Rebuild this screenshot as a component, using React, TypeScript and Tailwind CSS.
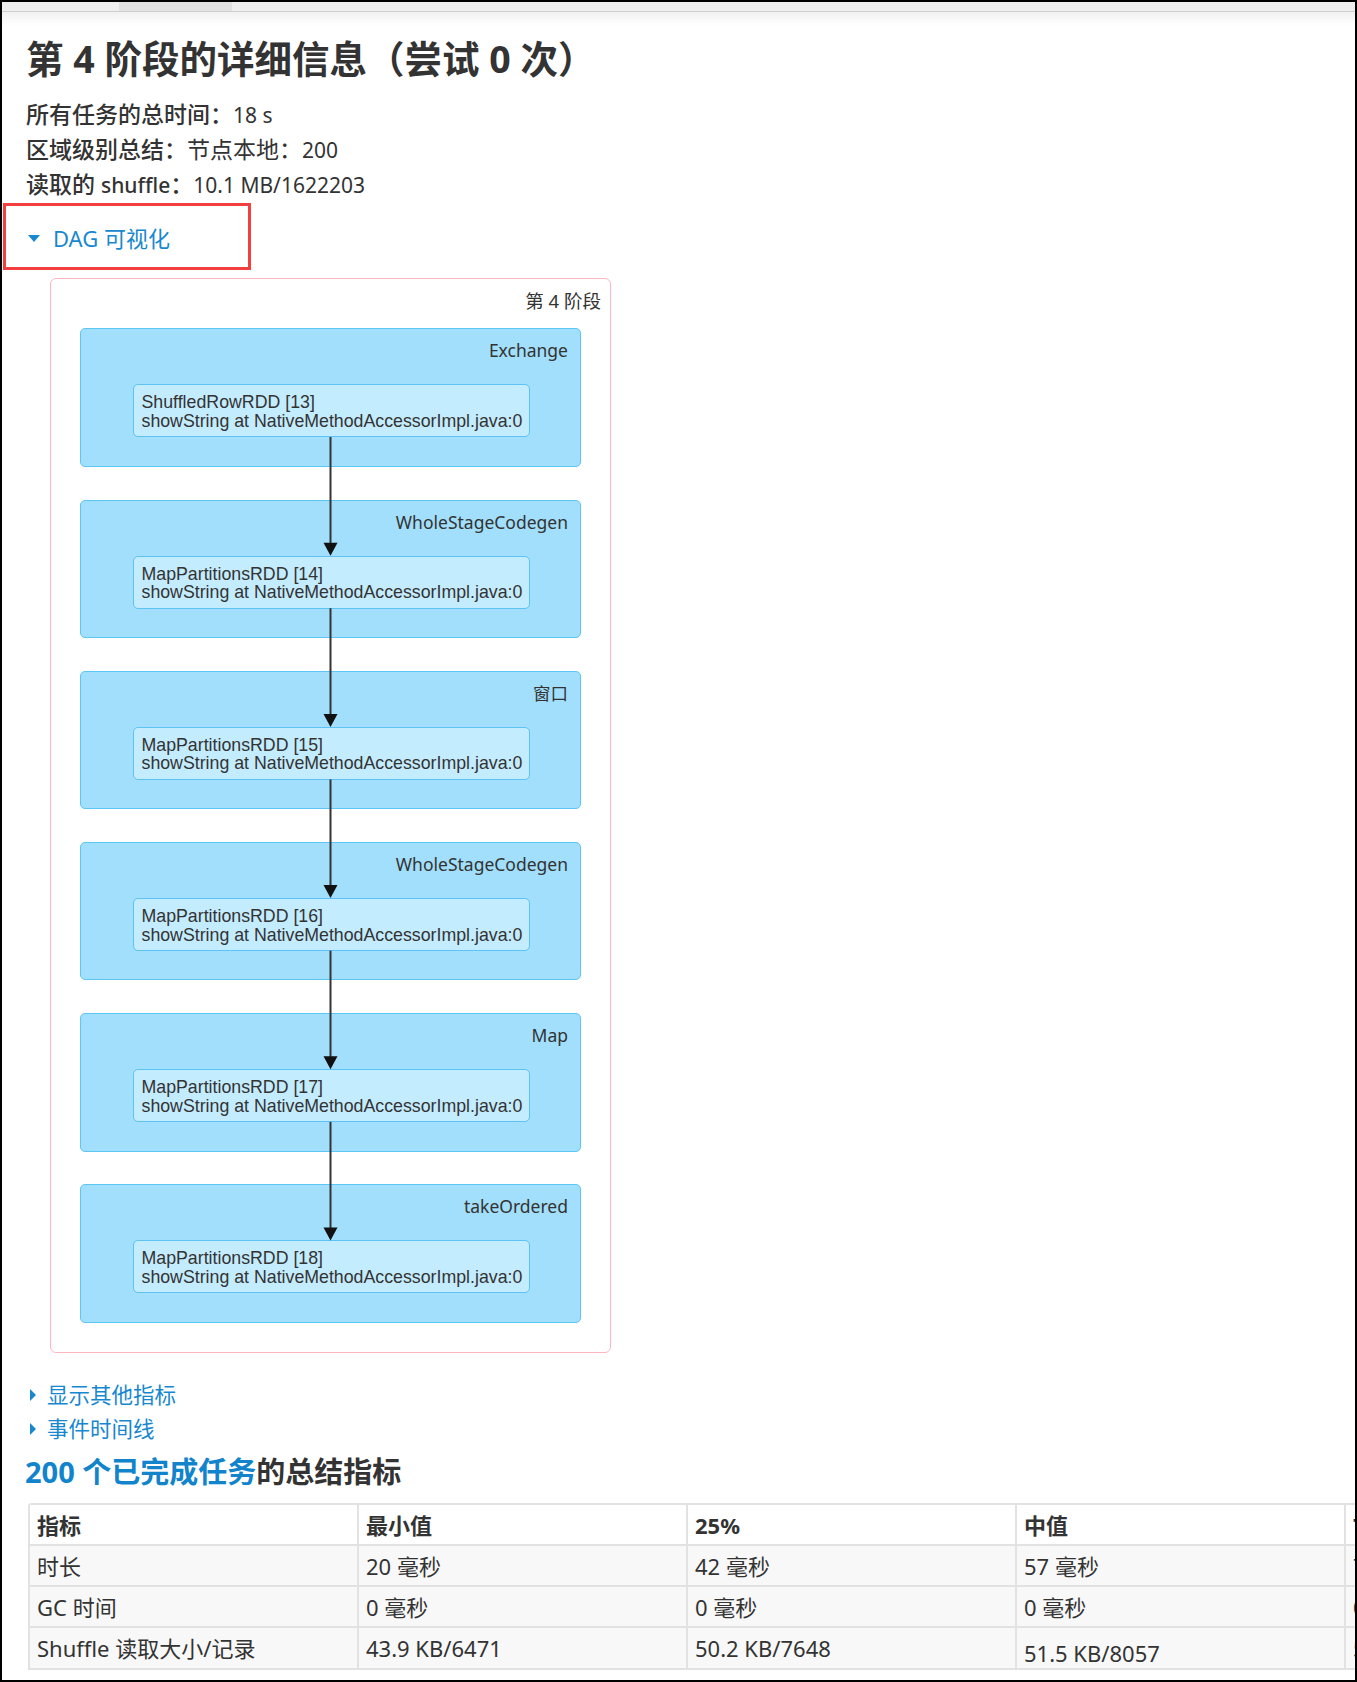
import React from "react";

const clusters = [
  { label: "Exchange", rdd: "ShuffledRowRDD [13]" },
  { label: "WholeStageCodegen", rdd: "MapPartitionsRDD [14]" },
  { label: "窗口", rdd: "MapPartitionsRDD [15]" },
  { label: "WholeStageCodegen", rdd: "MapPartitionsRDD [16]" },
  { label: "Map", rdd: "MapPartitionsRDD [17]" },
  { label: "takeOrdered", rdd: "MapPartitionsRDD [18]" },
];

const PITCH = 171.2;

const rows = [
  ["时长", "20 毫秒", "42 毫秒", "57 毫秒", "72 毫秒"],
  ["GC 时间", "0 毫秒", "0 毫秒", "0 毫秒", "0 毫秒"],
  ["Shuffle 读取大小/记录", "43.9 KB/6471", "50.2 KB/7648", "51.5 KB/8057", "52.8 KB/8290"],
];

function TriangleDown() {
  return (
    <svg viewBox="0 0 12 7" className="h-[7px] w-[12px]" aria-hidden>
      <path d="M0 0h12L6 7z" fill="currentColor" />
    </svg>
  );
}

function TriangleRight() {
  return (
    <svg viewBox="0 0 6 12" className="h-[12px] w-[6px]" aria-hidden>
      <path d="M0 0l6 6-6 6z" fill="currentColor" />
    </svg>
  );
}

function Latin({ children }: { children: React.ReactNode }) {
  return <span className="text-[21px] leading-none">{children}</span>;
}

function DagGraph() {
  return (
    <div className="ml-[48px] mt-[23px] h-[1075px] w-[561px] rounded-[6px] border border-[#ffb6c1] pt-[9px]">
      <div className="pr-[9px] text-right text-[18.5px] leading-[26px] text-[#333]">第 4 阶段</div>
      <div className="relative mx-[29px] mt-[14px] flex flex-col gap-[32.7px]">
        {clusters.map((c, i) => (
          <div
            key={i}
            className="h-[138.5px] rounded-[5px] border-[1.5px] border-[#5cc6f7] bg-[#a1dffc] pl-[51.5px] pt-[9px]"
          >
            <div className="pr-[12px] text-right text-[17.5px] leading-[24px] text-[#333]">{c.label}</div>
            <div className="mt-[22px] h-[53px] w-[397px] rounded-[5px] border border-[#5ec2f4] bg-[#c4ecff] pl-[8px] pt-[8px] font-['Liberation_Sans',Arial,sans-serif] text-[17.75px] leading-[18.7px] text-[#333]">
              <div>{c.rdd}</div>
              <div>showString at NativeMethodAccessorImpl.java:0</div>
            </div>
          </div>
        ))}
        <svg className="pointer-events-none absolute inset-0 h-full w-full" aria-hidden>
          {clusters.slice(0, -1).map((_, i) => {
            const y1 = i * PITCH + 109;
            const y2 = (i + 1) * PITCH + 56.5;
            return (
              <g key={i}>
                <line x1={250.5} y1={y1} x2={250.5} y2={y2 - 12} stroke="#333" strokeWidth={2} />
                <path d={`M243.5 ${y2 - 13}h14l-7 13z`} fill="#111" />
              </g>
            );
          })}
        </svg>
      </div>
    </div>
  );
}

export default function App() {
  return (
    <div className="relative h-[1682px] w-[1357px] overflow-hidden border-2 border-black bg-white font-['Noto_Sans','Noto_Sans_CJK_SC',sans-serif] text-[#333]">
      {/* browser tab strip */}
      <div className="flex h-[9px] bg-[#efefef]">
        <div className="ml-[117px] w-[113px] bg-[#e1e1e1]" />
      </div>
      <div className="h-[1px] bg-[#cfcfcf]" />
      <div className="h-[14px] bg-gradient-to-b from-[#f1f1f1] to-white" />

      <div className="pl-[24px]">
        <h1 className="mt-[10px] text-[37.5px] font-bold leading-[46px] text-[#333]">
          第 4 阶段的详细信息（尝试 0 次）
        </h1>
        <ul className="mt-[15px] text-[23px] leading-[34.5px]">
          <li className="h-[34.8px]">
            <strong className="font-medium">所有任务的总时间：</strong>
            <Latin>18 s</Latin>
          </li>
          <li className="h-[34.8px]">
            <strong className="font-medium">区域级别总结：</strong>节点本地：<Latin>200</Latin>
          </li>
          <li className="h-[34.8px]">
            <strong className="font-medium">
              读取的 <Latin>shuffle</Latin>：
            </strong>
            <Latin>10.1 MB/1622203</Latin>
          </li>
        </ul>
      </div>

      <div className="mt-[20px] flex h-[34px] items-center pl-[26px] text-[22px] text-[#1788d0]">
        <TriangleDown />
        <span className="ml-[13px]">DAG 可视化</span>
      </div>
      <div className="absolute left-[1px] top-[201px] h-[67px] w-[248px] border-[3px] border-[#f33f3f]" />

      <DagGraph />

      <div className="mt-[25px] pl-[28px] text-[21.5px] leading-[34px] text-[#1788d0]">
        <div className="flex items-center">
          <TriangleRight />
          <span className="ml-[11px]">显示其他指标</span>
        </div>
        <div className="flex items-center">
          <TriangleRight />
          <span className="ml-[11px]">事件时间线</span>
        </div>
      </div>

      <h3 className="mt-[7px] pl-[23px] text-[29px] font-bold leading-[38px]">
        <span className="text-[#1184cc]">200 个已完成任务</span>
        <span className="text-[#333]">的总结指标</span>
      </h3>

      <div className="ml-[26px] mt-[12px]">
        <table className="w-[1647px] table-fixed border-collapse overflow-hidden rounded-tl-[4px] text-[22px] leading-[30px]">
          <thead>
            <tr className="h-[41px] bg-white">
              {["指标", "最小值", "25%", "中值", "75%"].map((h) => (
                <th key={h} className="border-2 border-[#e2e2e2] px-[7px] text-left font-bold">
                  {h}
                </th>
              ))}
            </tr>
          </thead>
          <tbody>
            {rows.map((r, i) => (
              <tr key={i} className="h-[41px] bg-[#f8f8f8]">
                {r.map((c, j) => (
                  <td
                    key={j}
                    className={
                      i === 2 && j === 3
                        ? "border-2 border-[#e2e2e2] px-[7px] pt-[10px] align-top"
                        : "border-2 border-[#e2e2e2] px-[7px]"
                    }
                  >
                    {c}
                  </td>
                ))}
              </tr>
            ))}
          </tbody>
        </table>
      </div>
    </div>
  );
}
